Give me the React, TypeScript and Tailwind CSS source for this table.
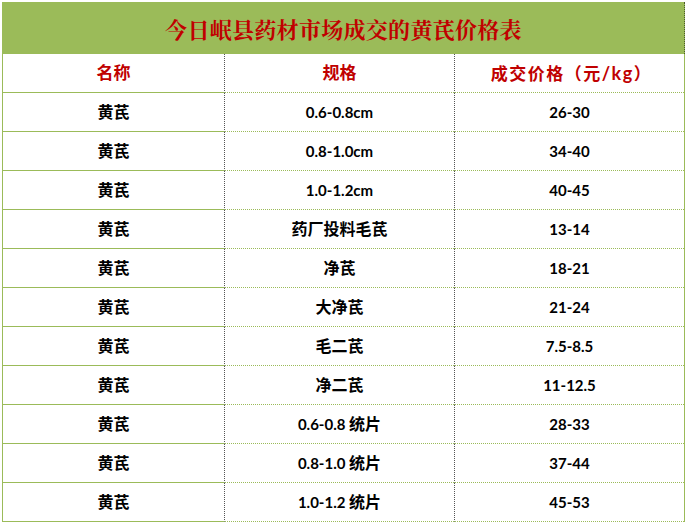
const rows: [string, string, string][] = [
  ["黄芪", "0.6-0.8cm", "26-30"],
  ["黄芪", "0.8-1.0cm", "34-40"],
  ["黄芪", "1.0-1.2cm", "40-45"],
  ["黄芪", "药厂投料毛芪", "13-14"],
  ["黄芪", "净芪", "18-21"],
  ["黄芪", "大净芪", "21-24"],
  ["黄芪", "毛二芪", "7.5-8.5"],
  ["黄芪", "净二芪", "11-12.5"],
  ["黄芪", "0.6-0.8 统片", "28-33"],
  ["黄芪", "0.8-1.0 统片", "37-44"],
  ["黄芪", "1.0-1.2 统片", "45-53"],
];

const cell =
  "h-[39px] flex items-center justify-center border-b border-[#9bbb59]";
const sep = "border-l border-dotted border-l-[#555]";
const font = "font-['Lato','Noto_Sans_CJK_SC',sans-serif]";

// CJK runs a bit larger than the Latin digits, like the source sheet
function Mixed({ text, cjk, latin }: { text: string; cjk: string; latin: string }) {
  const parts = text.match(/[\u3000-\u9fff\uff00-\uffef]+|[^\u3000-\u9fff\uff00-\uffef]+/g) || [];
  return (
    <span className="whitespace-pre">
      {parts.map((p, i) =>
        /[\u3000-\u9fff\uff00-\uffef]/.test(p) ? (
          <span key={i} className={cjk}>{p}</span>
        ) : (
          <span key={i} className={latin}>{p}</span>
        )
      )}
    </span>
  );
}

export default function App() {
  return (
    <div className="w-[688px] h-[524px] bg-white pt-[2px] pl-[2px] overflow-hidden">
      <div className="w-[683px] border-l border-r border-[#9bbb59]">
        <div className="h-[52px] bg-[#9bbb59] flex items-center justify-center border-r border-dotted border-r-[#4b5a2a] -mr-px">
          <h1 className="text-[22px] font-bold tracking-[0.3px] text-[#c00000] font-['Noto_Serif_CJK_SC','Noto_Sans_CJK_SC',serif]">
            今日岷县药材市场成交的黄芪价格表
          </h1>
        </div>
        <div className={`grid grid-cols-[221px_230px_230px] font-bold ${font}`}>
          <div className={`${cell} text-[#c00000]`}>
            <Mixed text="名称" cjk="text-[17px]" latin="text-[16px]" />
          </div>
          <div className={`${cell} ${sep} text-[#c00000]`}>
            <Mixed text="规格" cjk="text-[17px]" latin="text-[16px]" />
          </div>
          <div className={`${cell} ${sep} text-[#c00000] tracking-[1.5px] pl-[4px]`}>
            <Mixed text="成交价格（元/kg）" cjk="text-[17px]" latin="text-[18px]" />
          </div>
          {rows.map((r, i) => (
            <div key={i} className="contents">
              <div className={`${cell} text-black`}>
                <Mixed text={r[0]} cjk="text-[16px]" latin="text-[15px]" />
              </div>
              <div className={`${cell} ${sep} text-black`}>
                <Mixed text={r[1]} cjk="text-[16px]" latin="text-[15px]" />
              </div>
              <div className={`${cell} ${sep} text-black`}>
                <Mixed text={r[2]} cjk="text-[16px]" latin="text-[15px]" />
              </div>
            </div>
          ))}
        </div>
      </div>
    </div>
  );
}
